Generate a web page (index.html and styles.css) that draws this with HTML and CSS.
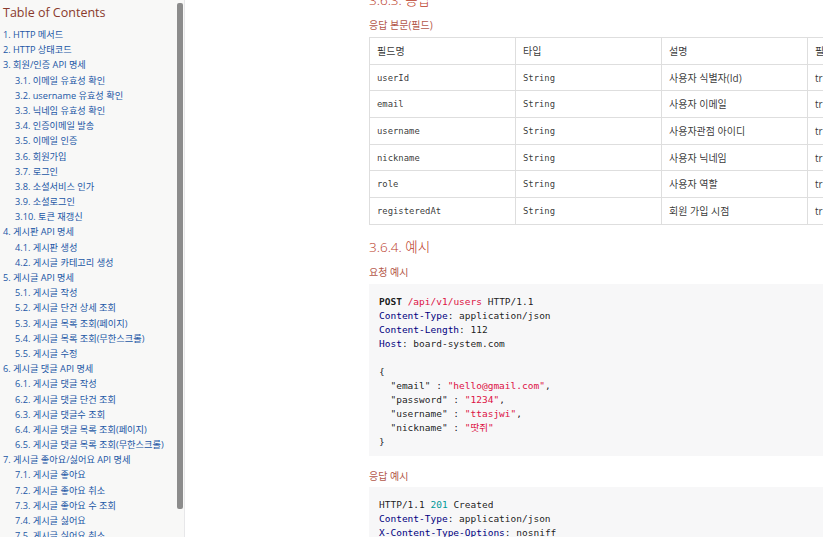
FILE: index.html
```html
<!DOCTYPE html>
<html lang="ko">
<head>
<meta charset="utf-8">
<title>API 명세</title>
<link rel="stylesheet" href="styles.css">
</head>
<body>
<div class="page">
  <nav class="toc">
    <div class="toc-title">Table of Contents</div>
    <ul class="toc-list">
      <li>1. HTTP 메서드</li>
      <li>2. HTTP 상태코드</li>
      <li>3. 회원/인증 API 명세
        <ul>
          <li>3.1. 이메일 유효성 확인</li>
          <li>3.2. username 유효성 확인</li>
          <li>3.3. 닉네임 유효성 확인</li>
          <li>3.4. 인증이메일 발송</li>
          <li>3.5. 이메일 인증</li>
          <li>3.6. 회원가입</li>
          <li>3.7. 로그인</li>
          <li>3.8. 소셜서비스 인가</li>
          <li>3.9. 소셜로그인</li>
          <li>3.10. 토큰 재갱신</li>
        </ul>
      </li>
      <li>4. 게시판 API 명세
        <ul>
          <li>4.1. 게시판 생성</li>
          <li>4.2. 게시글 카테고리 생성</li>
        </ul>
      </li>
      <li>5. 게시글 API 명세
        <ul>
          <li>5.1. 게시글 작성</li>
          <li>5.2. 게시글 단건 상세 조회</li>
          <li>5.3. 게시글 목록 조회(페이지)</li>
          <li>5.4. 게시글 목록 조회(무한스크롤)</li>
          <li>5.5. 게시글 수정</li>
        </ul>
      </li>
      <li>6. 게시글 댓글 API 명세
        <ul>
          <li>6.1. 게시글 댓글 작성</li>
          <li>6.2. 게시글 댓글 단건 조회</li>
          <li>6.3. 게시글 댓글수 조회</li>
          <li>6.4. 게시글 댓글 목록 조회(페이지)</li>
          <li>6.5. 게시글 댓글 목록 조회(무한스크롤)</li>
        </ul>
      </li>
      <li>7. 게시글 좋아요/싫어요 API 명세
        <ul>
          <li>7.1. 게시글 좋아요</li>
          <li>7.2. 게시글 좋아요 취소</li>
          <li>7.3. 게시글 좋아요 수 조회</li>
          <li>7.4. 게시글 싫어요</li>
          <li>7.5. 게시글 싫어요 취소</li>
        </ul>
      </li>
    </ul>
    <div class="toc-thumb"></div>
  </nav>

  <main class="content">
    <h4 class="sect first">3.6.3. 응답</h4>
    <div class="title">응답 본문(필드)</div>
    <table class="fields">
      <colgroup><col><col><col><col></colgroup>
      <tr><td>필드명</td><td>타입</td><td>설명</td><td>필수 여부</td></tr>
      <tr><td class="mono">userId</td><td class="mono">String</td><td>사용자 식별자(Id)</td><td>true</td></tr>
      <tr><td class="mono">email</td><td class="mono">String</td><td>사용자 이메일</td><td>true</td></tr>
      <tr><td class="mono">username</td><td class="mono">String</td><td>사용자관점 아이디</td><td>true</td></tr>
      <tr><td class="mono">nickname</td><td class="mono">String</td><td>사용자 닉네임</td><td>true</td></tr>
      <tr><td class="mono">role</td><td class="mono">String</td><td>사용자 역할</td><td>true</td></tr>
      <tr><td class="mono">registeredAt</td><td class="mono">String</td><td>회원 가입 시점</td><td>true</td></tr>
    </table>

    <h4 class="sect">3.6.4. 예시</h4>
    <div class="title">요청 예시</div>
    <pre class="code"><span class="kw">POST</span> <span class="str">/api/v1/users</span> HTTP/1.1
<span class="hd">Content-Type</span>: application/json
<span class="hd">Content-Length</span>: 112
<span class="hd">Host</span>: board-system.com

{
  "email" : <span class="str">"hello@gmail.com"</span>,
  "password" : <span class="str">"1234"</span>,
  "username" : <span class="str">"ttasjwi"</span>,
  "nickname" : <span class="str">"땃쥐"</span>
}</pre>

    <div class="title after-code">응답 예시</div>
    <pre class="code">HTTP/1.1 <span class="num">201</span> Created
<span class="hd">Content-Type</span>: application/json
<span class="hd">X-Content-Type-Options</span>: nosniff
<span class="hd">X-XSS-Protection</span>: 0</pre>
  </main>
</div>
</body>
</html>
```

FILE: styles.css
```css
html, body {
  margin: 0;
  padding: 0;
  background: #fff;
}

.page {
  display: flex;
  width: 823px;
  height: 537px;
  overflow: hidden;
}

.toc {
  position: relative;
  flex: 0 0 185px;
  box-sizing: border-box;
  height: 537px;
  background: #f8f8f7;
  border-right: 1px solid #e7e7e9;
  padding: 4px 0 0 3px;
  overflow: hidden;
  font-family: "Open Sans", "Noto Sans CJK KR", sans-serif;
}

.toc-title {
  font-size: 12.5px;
  line-height: 18px;
  color: #8a3a2c;
  font-weight: 400;
  margin-bottom: 5px;
}

.toc-list,
.toc-list ul {
  list-style: none;
  margin: 0;
  padding: 0;
}

.toc-list ul {
  padding-left: 12px;
}

.toc-list li {
  font-size: 9.2px;
  line-height: 15.18px;
  color: #2156a5;
  white-space: nowrap;
}

.toc-thumb {
  position: absolute;
  left: 177px;
  top: 3px;
  width: 6px;
  height: 506px;
  border-radius: 2px;
  background: #8c8c8c;
}

.content {
  flex: 0 0 640px;
  padding-left: 184px;
  font-family: "Open Sans", "Noto Sans CJK KR", sans-serif;
  color: rgba(0, 0, 0, 0.8);
}

.sect {
  margin: 14px 0 0;
  font-size: 13.5px;
  line-height: 16px;
  font-weight: 300;
  color: #ba3925;
}

.sect.first {
  margin-top: -8px;
}

.title {
  margin: 10px 0 5px;
  font-size: 10px;
  line-height: 14px;
  color: #b4584a;
}

.title.after-code {
  margin-top: 13px;
  margin-bottom: 4px;
}

.fields {
  border-collapse: collapse;
  table-layout: fixed;
  width: 584px;
}

.fields col {
  width: 146px;
}

.fields tr {
  height: 26.7px;
}

.fields td {
  border: 1px solid #dedede;
  padding: 0 7px;
  font-size: 10px;
  line-height: 14px;
  color: rgba(0, 0, 0, 0.8);
  white-space: nowrap;
  overflow: hidden;
}

.fields td.mono {
  font-family: "DejaVu Sans Mono", monospace;
  font-size: 8.9px;
}

.code {
  margin: 0;
  padding: 11px 10px 7px;
  background: #f7f7f8;
  font-family: "DejaVu Sans Mono", "Noto Sans CJK KR", monospace;
  font-size: 9.5px;
  line-height: 14px;
  color: rgba(0, 0, 0, 0.9);
}

.code .kw {
  font-weight: bold;
}

.code .str {
  color: #d14;
}

.code .hd {
  color: #000080;
}

.code .num {
  color: #099;
}
```
